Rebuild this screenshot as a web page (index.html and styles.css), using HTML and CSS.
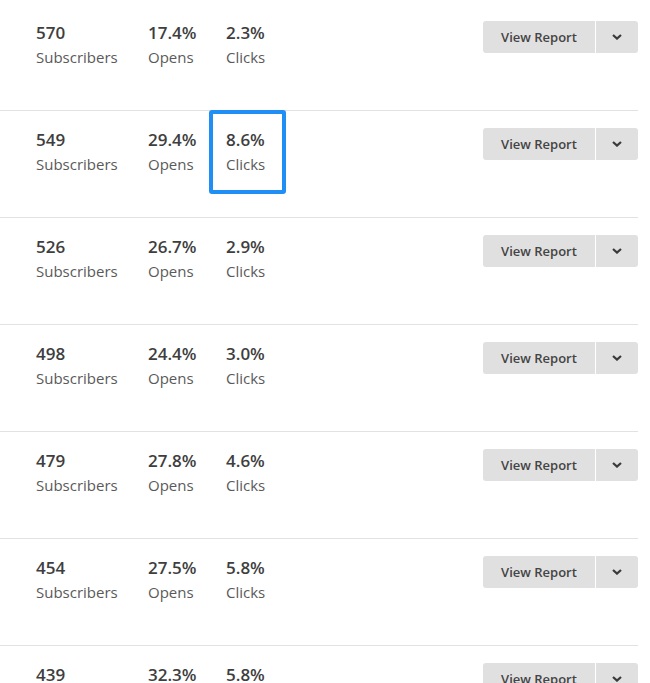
FILE: index.html
```html
<html>
<head>
	<link rel="stylesheet" href="styles.css">
</head>
<body>
<div class="report_list">
	<div class="report_row">
		<div class="stats">
			<div class="stat"><span class="stat_value">570</span><span class="stat_label">Subscribers</span></div>
			<div class="stat"><span class="stat_value">17.4%</span><span class="stat_label">Opens</span></div>
			<div class="stat"><span class="stat_value">2.3%</span><span class="stat_label">Clicks</span></div>
		</div>
		<div class="button_group">
			<button class="report_button">View Report</button>
			<button class="menu_button"><svg viewBox="0 0 10 6"><path d="M1 1l4 3.6L9 1"/></svg></button>
		</div>
	</div>
	<div class="report_row">
		<div class="highlight"></div>
		<div class="stats">
			<div class="stat"><span class="stat_value">549</span><span class="stat_label">Subscribers</span></div>
			<div class="stat"><span class="stat_value">29.4%</span><span class="stat_label">Opens</span></div>
			<div class="stat"><span class="stat_value">8.6%</span><span class="stat_label">Clicks</span></div>
		</div>
		<div class="button_group">
			<button class="report_button">View Report</button>
			<button class="menu_button"><svg viewBox="0 0 10 6"><path d="M1 1l4 3.6L9 1"/></svg></button>
		</div>
	</div>
	<div class="report_row">
		<div class="stats">
			<div class="stat"><span class="stat_value">526</span><span class="stat_label">Subscribers</span></div>
			<div class="stat"><span class="stat_value">26.7%</span><span class="stat_label">Opens</span></div>
			<div class="stat"><span class="stat_value">2.9%</span><span class="stat_label">Clicks</span></div>
		</div>
		<div class="button_group">
			<button class="report_button">View Report</button>
			<button class="menu_button"><svg viewBox="0 0 10 6"><path d="M1 1l4 3.6L9 1"/></svg></button>
		</div>
	</div>
	<div class="report_row">
		<div class="stats">
			<div class="stat"><span class="stat_value">498</span><span class="stat_label">Subscribers</span></div>
			<div class="stat"><span class="stat_value">24.4%</span><span class="stat_label">Opens</span></div>
			<div class="stat"><span class="stat_value">3.0%</span><span class="stat_label">Clicks</span></div>
		</div>
		<div class="button_group">
			<button class="report_button">View Report</button>
			<button class="menu_button"><svg viewBox="0 0 10 6"><path d="M1 1l4 3.6L9 1"/></svg></button>
		</div>
	</div>
	<div class="report_row">
		<div class="stats">
			<div class="stat"><span class="stat_value">479</span><span class="stat_label">Subscribers</span></div>
			<div class="stat"><span class="stat_value">27.8%</span><span class="stat_label">Opens</span></div>
			<div class="stat"><span class="stat_value">4.6%</span><span class="stat_label">Clicks</span></div>
		</div>
		<div class="button_group">
			<button class="report_button">View Report</button>
			<button class="menu_button"><svg viewBox="0 0 10 6"><path d="M1 1l4 3.6L9 1"/></svg></button>
		</div>
	</div>
	<div class="report_row">
		<div class="stats">
			<div class="stat"><span class="stat_value">454</span><span class="stat_label">Subscribers</span></div>
			<div class="stat"><span class="stat_value">27.5%</span><span class="stat_label">Opens</span></div>
			<div class="stat"><span class="stat_value">5.8%</span><span class="stat_label">Clicks</span></div>
		</div>
		<div class="button_group">
			<button class="report_button">View Report</button>
			<button class="menu_button"><svg viewBox="0 0 10 6"><path d="M1 1l4 3.6L9 1"/></svg></button>
		</div>
	</div>
	<div class="report_row">
		<div class="stats">
			<div class="stat"><span class="stat_value">439</span><span class="stat_label">Subscribers</span></div>
			<div class="stat"><span class="stat_value">32.3%</span><span class="stat_label">Opens</span></div>
			<div class="stat"><span class="stat_value">5.8%</span><span class="stat_label">Clicks</span></div>
		</div>
		<div class="button_group">
			<button class="report_button">View Report</button>
			<button class="menu_button"><svg viewBox="0 0 10 6"><path d="M1 1l4 3.6L9 1"/></svg></button>
		</div>
	</div>
</div>
</body>
</html>
```

FILE: styles.css
```css
html {
	background: white;
}

body {
	margin: 0;
	padding: 4px 0 0 0;
	width: 638px;
	font-family: "Open Sans", sans-serif;
	overflow: hidden;
}

.report_list {
	display: flex;
	flex-direction: column;
}

.report_row {
	position: relative;
	display: flex;
	justify-content: space-between;
	align-items: flex-start;
	height: 106px;
	border-bottom: 1px solid #e2e2e2;
}

.stats {
	display: grid;
	grid-template-columns: 112px 78px auto;
	padding: 16px 0 0 36px;
}

.stat {
	display: flex;
	flex-direction: column;
}

.stat_value {
	font-size: 17px;
	font-weight: 600;
	line-height: 26px;
	color: #3e3e3e;
}

.stat_label {
	font-size: 15px;
	line-height: 22px;
	color: #5a5a5a;
}

.button_group {
	display: flex;
	column-gap: 1px;
	margin-top: 17px;
}

button {
	height: 32px;
	border: 0;
	background: #e0e0e0;
	cursor: pointer;
	font-family: "Open Sans", sans-serif;
	color: #444;
}

.report_button {
	width: 112px;
	font-size: 13px;
	font-weight: 600;
	border-radius: 3px 0 0 3px;
}

.menu_button {
	width: 42px;
	border-radius: 0 3px 3px 0;
	display: flex;
	align-items: center;
	justify-content: center;
}

.menu_button svg {
	width: 10px;
	height: 6px;
	fill: none;
	stroke: #3a3a3a;
	stroke-width: 2.2;
}

/* selection box drawn over the clicks cell */
.highlight {
	position: absolute;
	top: -1px;
	left: 209px;
	width: 69px;
	height: 76px;
	border: 4px solid #1f8ef5;
	border-radius: 3px;
}
```
